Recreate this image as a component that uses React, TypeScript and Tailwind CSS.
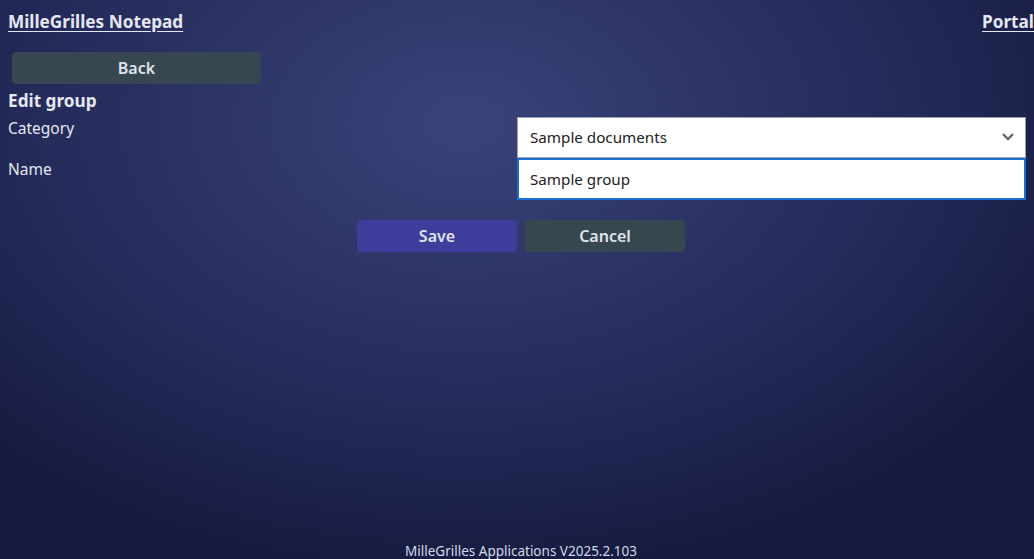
import React from "react";

export default function App() {
  return (
    <div
      className="relative w-[1034px] h-[559px] overflow-hidden text-[#e5e7f2]"
      style={{ fontFamily: '"Noto Sans", "Open Sans", sans-serif' }}
    >
      <div className="absolute inset-0 bg-[radial-gradient(ellipse_65%_80%_at_45%_22%,#3a4479_0%,#2e3668_35%,#222856_70%,#171b40_100%)]" />
      <div className="relative flex flex-col h-full px-2">
        <header className="flex justify-between items-center h-[44px]">
          <a className="text-[17.2px] font-bold underline underline-offset-[3px]">MilleGrilles Notepad</a>
          <a className="text-[17.2px] font-bold underline underline-offset-[3px] mr-[-8px]">Portal</a>
        </header>
        <div className="pt-[8px] pl-[4px]">
          <button className="w-[249px] h-[32px] rounded-[4px] bg-[#37474f] text-[16px] font-semibold text-[#dfe3ec]">Back</button>
        </div>
        <h2 className="text-[17.2px] font-bold mt-[4px] leading-[26px]">Edit group</h2>
        <div className="grid grid-cols-2 mt-[3px]">
          <div className="text-[15.5px] leading-[22px] h-[41px]">Category</div>
          <div className="relative h-[41px] bg-white border border-[#9aa0b0] flex items-center pl-[12px] text-[15.2px] text-[#222]">
            Sample documents
            <svg className="absolute right-[10px] top-[14px]" width="14" height="10" viewBox="0 0 14 10">
              <path d="M2 2 L7 7 L12 2" stroke="#666" strokeWidth="2.4" fill="none" />
            </svg>
          </div>
          <div className="text-[15.5px] leading-[22px] h-[42px]">Name</div>
          <div className="h-[42px] bg-white border-2 border-[#1a6fd1] flex items-center pl-[11px] text-[15.2px] text-[#222]">
            Sample group
          </div>
        </div>
        <div className="flex justify-center gap-[8px] mt-[20px] pl-[8px]">
          <button className="w-[160px] h-[32px] rounded-[4px] bg-[#3f3d9b] text-[16px] font-semibold text-[#dfe3ec]">Save</button>
          <button className="w-[160px] h-[32px] rounded-[4px] bg-[#37474f] text-[16px] font-semibold text-[#dfe3ec]">Cancel</button>
        </div>
        <div className="flex-1" />
        <footer className="text-center text-[13.5px] leading-[18px] mb-[-1px] pl-[8px] text-[#d4d7e6]">MilleGrilles Applications V2025.2.103</footer>
      </div>
    </div>
  );
}
